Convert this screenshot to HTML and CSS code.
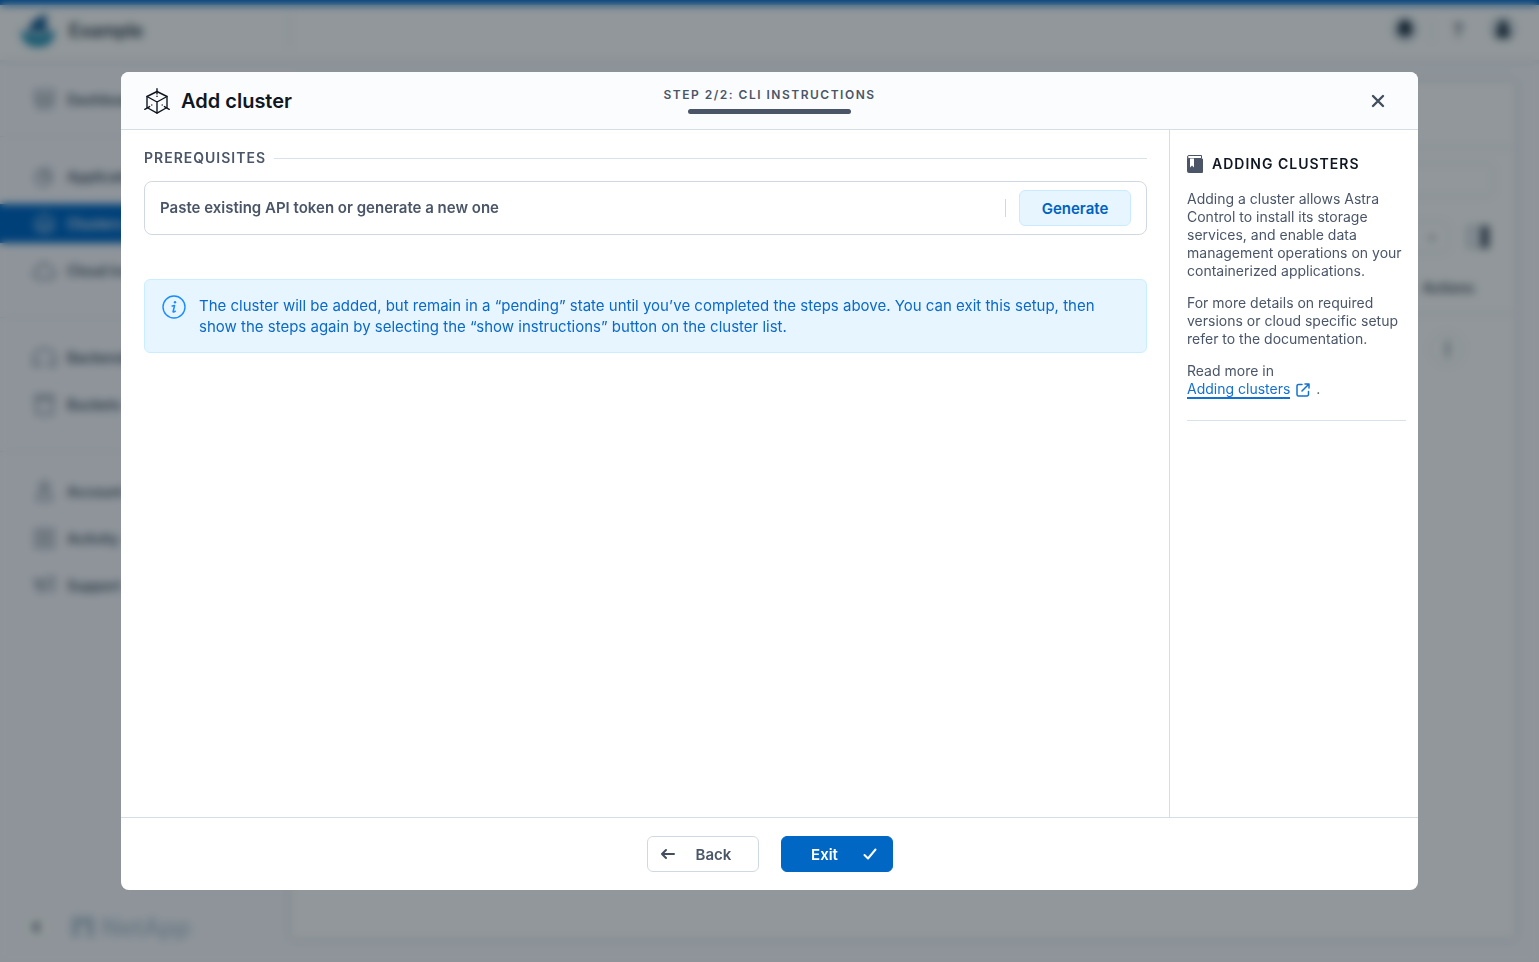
FILE: index.html
```html
<!DOCTYPE html>
<html lang="en">
<head>
  <meta charset="UTF-8" />
  <meta name="viewport" content="width=device-width, initial-scale=1" />
  <title>Add cluster</title>
  <link rel="stylesheet" href="styles.css">
</head>
<body>

  <div class="app" inert>
    <header class="topbar">
      <div class="brand">
        <svg width="36" height="36" viewBox="0 0 36 36" aria-hidden="true">
          <path d="M8 19C9 10 16 3 28 1c-3 5-2 12 1 18z" fill="#1d6396"/>
          <path d="M1 16c8 8 26 8 34 0 0 11-5 18-17 18S1 27 1 16z" fill="#2b93b5"/>
        </svg>
        <span>Example</span>
      </div>
      <div class="topbar-actions">
        <button type="button" aria-label="Notifications">
          <svg width="24" height="24" viewBox="0 0 24 24"><circle cx="12" cy="12" r="12" fill="#c3d0db"/><path d="M12 3c-4 1-6 4-6 7v4l-2 3h16l-2-3v-4c0-3-2-6-6-7zM9 18h6l-3 3z" fill="#1d2b3a"/></svg>
        </button>
        <span class="topbar-line"></span>
        <button type="button" aria-label="Help">?</button>
        <button type="button" aria-label="User">
          <svg width="24" height="24" viewBox="0 0 24 24"><circle cx="12" cy="12" r="12" fill="#c3d0db"/><circle cx="12" cy="8" r="4" fill="#1d2b3a"/><path d="M5 20c1-7 4-9 7-9s6 2 7 9z" fill="#1d2b3a"/></svg>
        </button>
      </div>
    </header>

    <div class="workspace">
      <nav class="sidebar">
        <div class="nav-group nav-group-first">
          <a href="#"><svg class="nav-icon" viewBox="0 0 24 24"><path d="M3 3h18v10H3zM5 13v7h14v-7M8 8l4 4 4-4"/></svg>Dashboard</a>
        </div>
        <div class="nav-group">
          <a href="#"><svg class="nav-icon" viewBox="0 0 24 24"><path d="M11 5a8 8 0 1 0 8 8h-8zM15 2v7h6"/></svg>Applications</a>
          <a href="#" class="active"><svg class="nav-icon" viewBox="0 0 24 24"><path d="M12 2l9 6v9l-4 4H7l-4-4V8zM7 12h10v5H7z"/></svg>Clusters</a>
          <a href="#"><svg class="nav-icon" viewBox="0 0 24 24"><path d="M5 20a4 4 0 0 1 0-9c1-8 12-8 13-1 6 1 6 10 0 10z"/></svg>Cloud instances</a>
        </div>
        <div class="nav-group">
          <a href="#"><svg class="nav-icon" viewBox="0 0 24 24"><path d="M1 20v-7c1-6 4-10 11-10s10 4 11 10v7h-6v-5M1 20h6v-5"/></svg>Backends</a>
          <a href="#"><svg class="nav-icon" viewBox="0 0 24 24"><path d="M3 3h18v3H3zM4 6v16h16V6"/></svg>Buckets</a>
        </div>
        <div class="nav-group">
          <a href="#"><svg class="nav-icon" viewBox="0 0 24 24"><circle cx="12" cy="6" r="4"/><path d="M5 21c0-8 3-10 7-10s7 2 7 10z"/></svg>Account</a>
          <a href="#"><svg class="nav-icon" viewBox="0 0 24 24"><path d="M3 3h18v18H3zM7 8h10M7 12h10M7 16h10"/></svg>Activity</a>
          <a href="#"><svg class="nav-icon" viewBox="0 0 24 24"><path d="M3 6l5 1v7l-5-1zM8 7l5 1 8-5v14l-8-3H8l1 7"/></svg>Support</a>
        </div>
        <div class="sidebar-footer">
          <button type="button" class="round" aria-label="Collapse">
            <svg width="12" height="12" viewBox="0 0 12 12"><path d="M8 1L3 6l5 5" fill="none" stroke="#4a5667" stroke-width="3"/></svg>
          </button>
          <svg width="22" height="20" viewBox="0 0 22 20" aria-hidden="true"><path d="M0 0h22v20h-7V7H7v13H0z" fill="#b9c9d6"/></svg>
          <span>NetApp</span>
        </div>
      </nav>

      <main class="panel">
        <div class="panel-head"></div>
        <div class="panel-search"></div>
        <div class="panel-tools">
          <button type="button" class="panel-drop" aria-label="Sort">
            <svg width="8" height="8" viewBox="0 0 8 8"><path d="M0 2h8L4 7z" fill="#8a97a5"/></svg>
          </button>
          <svg width="22" height="22" viewBox="0 0 22 22" aria-hidden="true"><path d="M1 1h20v20H1z" fill="#e6ebef" stroke="#bcc6cf" stroke-width="2"/><path d="M14 0h8v22h-8z" fill="#4a5667"/></svg>
        </div>
        <div class="panel-columns">Actions</div>
        <div class="panel-row">
          <button type="button" class="round" aria-label="Row actions">
            <svg width="4" height="16" viewBox="0 0 4 16"><path d="M1 0h3v16H1z" fill="#8a97a5"/></svg>
          </button>
        </div>
      </main>
    </div>
  </div>

  <div class="overlay">
    <form class="modal" role="dialog" aria-labelledby="modalTitle">
      <header class="modal-header">
        <h1 id="modalTitle">
          <svg width="26" height="26" viewBox="0 0 26 26" fill="none" stroke="#0f1722" stroke-width="1.4" stroke-linecap="round" stroke-linejoin="round" aria-hidden="true">
            <path d="M13 3.5l10 5v11l-10 5.7-10-5.7v-11z"/>
            <path d="M3 8.5L13 14l10-5.5M13 14v11"/>
            <path d="M13 .7v5.2M.8 21.3l4.8-2.7M25.2 21.3l-4.8-2.7"/>
            <path d="M13 8.3v.1M7.8 17v.1M18.2 17v.1"/>
          </svg>
          Add cluster
        </h1>
        <div class="step">
          <span>STEP 2/2: CLI INSTRUCTIONS</span>
          <div class="step-bar"></div>
        </div>
        <button type="button" class="close" aria-label="Close">
          <svg width="14" height="14" viewBox="0 0 14 14" fill="none" stroke="#434f5f" stroke-width="2.4" stroke-linecap="round"><path d="M2 2l10 10M12 2L2 12"/></svg>
        </button>
      </header>

      <div class="modal-body">
        <section class="content">
          <h2 class="section-title">PREREQUISITES</h2>
          <div class="token-box">
            <input type="text" name="token" aria-label="API token" placeholder="Paste existing API token or generate a new one" autocomplete="off" />
            <span class="token-line"></span>
            <button type="button" class="btn btn-light">Generate</button>
          </div>
          <div class="info">
            <svg width="24" height="24" viewBox="0 0 24 24" fill="none" stroke="#1a8cff" aria-hidden="true">
              <circle cx="12" cy="12" r="11" stroke-width="1.4"/>
              <circle cx="13" cy="7.3" r="1.2" fill="#1a8cff" stroke="none"/>
              <path d="M10.2 11l2.4-.5-1.5 6c-.1.9.8.7 2.2-.3" stroke-width="1.5" stroke-linecap="round" stroke-linejoin="round"/>
            </svg>
            <p>The cluster will be added, but remain in a “pending” state until you’ve completed the steps above. You can exit this setup, then show the steps again by selecting the “show instructions” button on the cluster list.</p>
          </div>
        </section>

        <aside class="help">
          <h2>
            <svg width="16" height="18" viewBox="0 0 16 18" aria-hidden="true">
              <path d="M2 .5h12.5v3H2A1.5 1.5 0 0 1 2 .5z" fill="#fff" stroke="#4a5667"/>
              <path d="M0 2c.4 1 1 1.5 2 1.5h13a1 1 0 0 1 1 1V17a1 1 0 0 1-1 1H2a2 2 0 0 1-2-2z" fill="#4a5667"/>
              <path d="M3 3.5h4v9l-2-2-2 2z" fill="#fff"/>
            </svg>
            ADDING CLUSTERS
          </h2>
          <p>Adding a cluster allows Astra Control to install its storage services, and enable data management operations on your containerized applications.</p>
          <p>For more details on required versions or cloud specific setup refer to the documentation.</p>
          <p>Read more in<br>
            <a href="#">Adding clusters</a>
            <svg class="external" width="14" height="14" viewBox="0 0 14 14" fill="none" stroke="#1371d0" stroke-width="1.5" stroke-linecap="round" stroke-linejoin="round" aria-hidden="true"><path d="M6 1.5H2.500A1.500 1.500 0 0 0 1 3v8.500A1.500 1.500 0 0 0 2.500 13H11a1.500 1.500 0 0 0 1.500-1.500v-3M9 1h4v4M13 1L6 8"/></svg>
            .</p>
        </aside>
      </div>

      <footer class="modal-footer">
        <button type="button" class="btn btn-outline">
          <svg width="14" height="12" viewBox="0 0 14 12" fill="none" stroke="#434f5f" stroke-width="2" stroke-linecap="round" stroke-linejoin="round" aria-hidden="true"><path d="M13 6H1M5 2L1 6l4 4"/></svg>
          <span>Back</span>
        </button>
        <button type="submit" class="btn btn-primary">
          <span>Exit</span>
          <svg width="14" height="12" viewBox="0 0 14 12" fill="none" stroke="#fff" stroke-width="2" stroke-linecap="round" stroke-linejoin="round" aria-hidden="true"><path d="M1.5 7L5 10.5l7.500-9"/></svg>
        </button>
      </footer>
    </form>
  </div>

</body>
</html>
```
FILE: styles.css
```css
* {
  box-sizing: border-box;
}
body {
  margin: 0;
  font-family: Inter, "Liberation Sans", sans-serif;
  font-size: 15px;
  color: #4a5667;
}
h1, h2, p {
  margin: 0;
}
button {
  font-family: inherit;
  cursor: pointer;
}

/* page behind the dialog */
.app {
  display: flex;
  flex-direction: column;
  height: 100vh;
  background: #fafaff;
  overflow: hidden;
}
.topbar {
  display: flex;
  align-items: center;
  flex: none;
  height: 60px;
  padding: 0 24px 4px 20px;
  border-top: 5px solid #0067c5;
  background: #fff;
  box-shadow: 0 1px 4px #d5dae0;
}
.brand {
  display: flex;
  align-items: center;
  gap: 13px;
  width: 270px;
  border-right: 1px solid #dce2e8;
  font-size: 18px;
  font-weight: 600;
  color: #2b3a4b;
}
.topbar-actions {
  display: flex;
  align-items: center;
  gap: 10px;
  margin-left: auto;
}
.topbar-actions button {
  width: 32px;
  padding: 0;
  border: 0;
  background: none;
  font-size: 18px;
  font-weight: 600;
  color: #4a5667;
}
.topbar-actions button:last-child {
  width: 24px;
  margin-left: 7px;
}
.topbar-line {
  width: 1px;
  height: 24px;
  background: #e0e5ea;
}
.workspace {
  display: flex;
  flex: 1;
}
.sidebar {
  display: flex;
  flex-direction: column;
  width: 289px;
  flex: none;
}
.nav-group {
  display: flex;
  flex-direction: column;
  gap: 8px;
  padding: 20px 0 27px;
  border-bottom: 1px solid #e2e8ee;
}
.nav-group-first {
  padding-bottom: 17px;
}
.nav-group:nth-child(4) {
  border-bottom: 0;
}
.nav-group a {
  display: flex;
  align-items: center;
  gap: 11px;
  height: 39px;
  padding-left: 33px;
  font-size: 14px;
  font-weight: 600;
  color: #4a5667;
  text-decoration: none;
}
.nav-group .active {
  background: #0067c5;
  color: #e0ebf7;
}
.nav-icon {
  width: 23px;
  height: 23px;
  fill: none;
  stroke: currentColor;
  stroke-width: 2;
  opacity: 0.7;
}
.sidebar-footer {
  display: flex;
  align-items: center;
  gap: 8px;
  margin-top: auto;
  padding: 0 20px 18px;
  font-size: 24px;
  font-weight: 600;
  color: #b9c9d6;
}
.round {
  display: grid;
  place-items: center;
  width: 34px;
  height: 34px;
  padding: 0;
  border: 1px solid #dce2e8;
  border-radius: 50%;
  background: #fff;
}
.sidebar-footer .round {
  margin-right: 10px;
}
.panel {
  flex: 1;
  margin: 20px 22px 22px 0;
  border: 1px solid #dce2e8;
  border-radius: 6px;
  background: #fff;
  box-shadow: 0 0 6px #dce2e8;
}
.panel-head {
  height: 67px;
  border-bottom: 1px solid #dce2e8;
}
.panel-search {
  height: 34px;
  margin: 15px 22px 24px;
  border: 1px solid #dce2e8;
  border-radius: 6px;
}
.panel-tools {
  display: flex;
  justify-content: flex-end;
  align-items: center;
  gap: 18px;
  padding-right: 27px;
}
.panel-drop {
  width: 160px;
  height: 32px;
  padding-right: 12px;
  border: 1px solid #dce2e8;
  border-radius: 6px;
  background: #fff;
  text-align: right;
}
.panel-columns {
  height: 61px;
  padding: 26px 42px 0;
  border-bottom: 1px solid #dce2e8;
  font-size: 14px;
  font-weight: 600;
  text-align: right;
}
.panel-row {
  display: flex;
  justify-content: flex-end;
  padding: 18px 52px;
}

/* dialog */
.overlay {
  position: fixed;
  inset: 0;
  display: flex;
  padding: 72px 121px;
  background: rgba(0, 14, 22, 0.43);
  backdrop-filter: blur(4px);
}
.modal {
  display: flex;
  flex-direction: column;
  flex: 1;
  border-radius: 8px;
  background: #fff;
  overflow: hidden;
}
.modal-header {
  display: grid;
  grid-template-columns: 1fr auto 1fr;
  align-items: center;
  height: 58px;
  padding: 0 23px;
  border-bottom: 1px solid #d5dee5;
  background: #fbfcfe;
}
.modal-header h1 {
  display: flex;
  align-items: center;
  gap: 11px;
  font-size: 20px;
  font-weight: 600;
  color: #0f1722;
}
.step {
  display: flex;
  flex-direction: column;
  align-items: center;
  gap: 6px;
  font-size: 12px;
  line-height: 16px;
  font-weight: 600;
  letter-spacing: 1.5px;
}
.step-bar {
  width: 163px;
  height: 5px;
  border-radius: 3px;
  background: #4a5667;
}
.close {
  display: flex;
  justify-self: end;
  margin-right: 8px;
  padding: 2px;
  border: 0;
  background: none;
}
.modal-body {
  display: flex;
  flex: 1;
}
.content {
  flex: 1;
  padding: 20px 22px 20px 23px;
}
.section-title {
  display: flex;
  align-items: center;
  gap: 8px;
  margin-bottom: 15px;
  font-size: 14px;
  line-height: 16px;
  font-weight: 600;
  letter-spacing: 1px;
}
.section-title::after {
  content: "";
  flex: 1;
  height: 1px;
  background: #d8e2e8;
}
.token-box {
  display: flex;
  align-items: center;
  height: 54px;
  padding: 0 15px;
  border: 1px solid #d0d9e1;
  border-radius: 8px;
}
.token-box input {
  flex: 1;
  padding: 0;
  border: 0;
  outline: 0;
  font: 600 15px/20px Inter, "Liberation Sans", sans-serif;
  color: #4a5667;
}
.token-box input::placeholder {
  color: #4a5667;
  opacity: 1;
}
.token-line {
  width: 1px;
  height: 18px;
  margin-right: 13px;
  background: #d0d9e1;
}
.btn {
  display: flex;
  align-items: center;
  justify-content: center;
  gap: 8px;
  width: 112px;
  height: 36px;
  padding: 0 13px;
  border: 1px solid #d0d9e1;
  border-radius: 6px;
  background: #fff;
  font-size: 15px;
  font-weight: 600;
  color: #4a5667;
}
.btn span {
  flex: 1;
}
.btn-light {
  border-color: #c9eaff;
  background: #e6f5ff;
  color: #0062c0;
}
.btn-primary {
  padding: 0 15px 0 13px;
  border-color: #0067c5;
  background: #0067c5;
  color: #fff;
}
.info {
  display: flex;
  gap: 13px;
  margin-top: 44px;
  padding: 15px 17px;
  border: 1px solid #c9eeff;
  border-radius: 6px;
  background: #e6f5ff;
  color: #0b69c7;
}
.info svg {
  flex: none;
}
.info p {
  font-size: 15px;
  line-height: 21px;
}
.help {
  width: 249px;
  padding: 24px 12px 0 17px;
  border-left: 1px solid #d5dee5;
}
.help h2 {
  display: flex;
  align-items: center;
  gap: 9px;
  margin-bottom: 16px;
  font-size: 14px;
  line-height: 20px;
  font-weight: 600;
  letter-spacing: 1px;
  color: #0f1722;
}
.help p {
  margin-bottom: 14px;
  font-size: 14px;
  line-height: 18px;
}
.help p:last-child {
  padding-bottom: 22px;
  border-bottom: 1px solid #d8e2e8;
}
.help a {
  border-bottom: 2px solid #1371d0;
  color: #1371d0;
  text-decoration: none;
}
.external {
  margin: 0 2px;
  vertical-align: -3px;
}
.modal-footer {
  display: flex;
  align-items: center;
  justify-content: center;
  gap: 22px;
  height: 73px;
  border-top: 1px solid #d5dee5;
}
```
